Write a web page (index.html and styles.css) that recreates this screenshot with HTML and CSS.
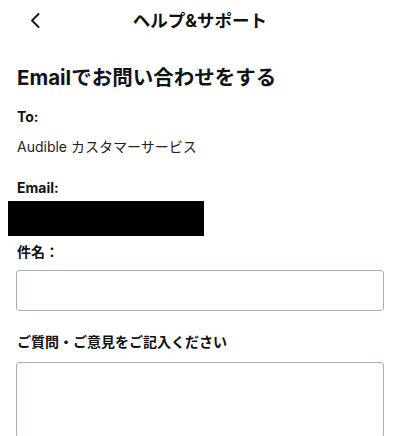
FILE: index.html
```html
<!DOCTYPE html>
<html lang="ja">
<head>
<meta charset="utf-8">
<link rel="stylesheet" href="styles.css">
</head>
<body>
<header class="topbar">
  <span class="back">
    <svg width="10" height="15" viewBox="0 0 10 15"><path d="M8.5 1 L2 7.5 L8.5 14" fill="none" stroke="#111" stroke-width="1.8" stroke-linecap="round" stroke-linejoin="round"/></svg>
  </span>
  <h1 class="title">ヘルプ&amp;サポート</h1>
</header>
<main class="content">
  <h2 class="heading">Emailでお問い合わせをする</h2>
  <div class="label to">To:</div>
  <div class="value">Audible カスタマーサービス</div>
  <div class="label email">Email:</div>
  <div class="redact"></div>
  <div class="label subject">件名：</div>
  <input class="field" type="text">
  <div class="label question">ご質問・ご意見をご記入ください</div>
  <textarea class="field area"></textarea>
</main>
</body>
</html>
```
FILE: styles.css
```css
* { box-sizing: border-box; }
html, body { margin: 0; padding: 0; background: #fff; }
body {
  font-family: "Inter", "Noto Sans CJK JP", sans-serif;
  color: #111;
  width: 400px;
  height: 436px;
  overflow: hidden;
}
.topbar {
  position: relative;
  height: 42px;
  display: flex;
  align-items: center;
  justify-content: center;
}
.back {
  position: absolute;
  left: 30px;
  top: 13px;
  width: 10px;
  height: 15px;
  display: block;
}
.back svg { display: block; }
.title {
  margin: 0;
  font-size: 17.5px;
  font-weight: 700;
  line-height: 42px;
}
.content {
  padding: 0 16px 0 16px;
  display: flex;
  flex-direction: column;
  align-items: flex-start;
}
.heading {
  margin: 24px 0 0 1px;
  font-size: 20.5px;
  font-weight: 700;
  line-height: 24px;
  color: #0f1418;
}
.label {
  font-size: 14px;
  font-weight: 700;
  line-height: 20px;
  margin-left: 1px;
}
.to { margin-top: 17px; }
.value {
  margin: 10px 0 0 1px;
  font-size: 14px;
  line-height: 20px;
  color: #222;
}
.email { margin-top: 21px; }
.redact {
  margin: 3px 0 0 -8px;
  width: 196px;
  height: 35px;
  background: #000;
}
.subject { margin-top: 6px; }
.field {
  display: block;
  margin: 8px 0 0 0;
  width: 368px;
  height: 41px;
  border: 1.5px solid #a2afc6;
  border-radius: 3px;
  background: #fff;
  padding: 0;
  font: inherit;
  outline: none;
}
.question { margin-top: 21px; }
.area {
  margin-top: 10px;
  height: 76px;
  resize: none;
}
```
